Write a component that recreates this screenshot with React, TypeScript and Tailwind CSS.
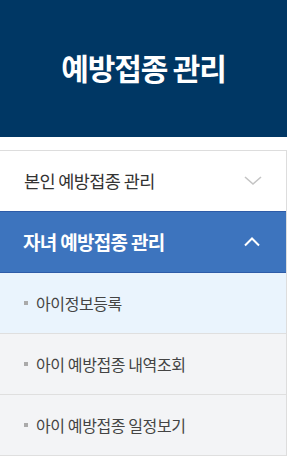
import React from "react";

const ChevronDown = ({ className }: { className?: string }) => (
  <svg width="18" height="10" viewBox="0 0 18 10" className={className}>
    <path d="M1 1l8 7 8-7" fill="none" stroke="currentColor" strokeWidth="1.6" />
  </svg>
);

const ChevronUp = ({ className }: { className?: string }) => (
  <svg width="16" height="10" viewBox="0 0 16 10" className={className}>
    <path d="M1 8.5l7-7 7 7" fill="none" stroke="currentColor" strokeWidth="2" />
  </svg>
);

const subMenus = [
  { label: "아이정보등록", active: true },
  { label: "아이 예방접종 내역조회", active: false },
  { label: "아이 예방접종 일정보기", active: false },
];

export default function App() {
  return (
    <div
      className="w-[293px] h-[459px] bg-white overflow-hidden"
      style={{ fontFamily: '"Noto Sans CJK KR", "Noto Sans", sans-serif' }}
    >
      <div className="w-[287px]">
        <div className="h-[137px] bg-[#003764] flex items-center justify-center">
          <h1 className="text-white text-[30px] font-bold tracking-[-1.1px] pb-[3px]">예방접종 관리</h1>
        </div>
        <div className="mt-[13px] border-t border-r border-[#dddddd]">
          <div className="h-[60px] flex items-center justify-between pl-[24px] pr-[24px] bg-white">
            <span className="text-[17.5px] text-[#333] tracking-[-0.6px]">본인 예방접종 관리</span>
            <ChevronDown className="text-[#c4c4c4]" />
          </div>
          <div className="h-[62px] flex items-center justify-between pl-[23px] pr-[26px] bg-[#3d74be] border-y border-[#2e5ca8]">
            <span className="text-[19px] font-bold text-white tracking-[-0.7px]">자녀 예방접종 관리</span>
            <ChevronUp className="text-white" />
          </div>
          {subMenus.map((m) => (
            <div
              key={m.label}
              className={`h-[61px] flex items-center pl-[24px] border-b border-[#dfdfdf] ${
                m.active ? "bg-[#eaf4fd]" : "bg-[#f3f4f6]"
              }`}
            >
              <span className="w-[4px] h-[4px] bg-[#aaaaaa] mr-[8px]" />
              <span className="text-[16px] text-[#444] tracking-[-0.4px]">{m.label}</span>
            </div>
          ))}
        </div>
      </div>
    </div>
  );
}
